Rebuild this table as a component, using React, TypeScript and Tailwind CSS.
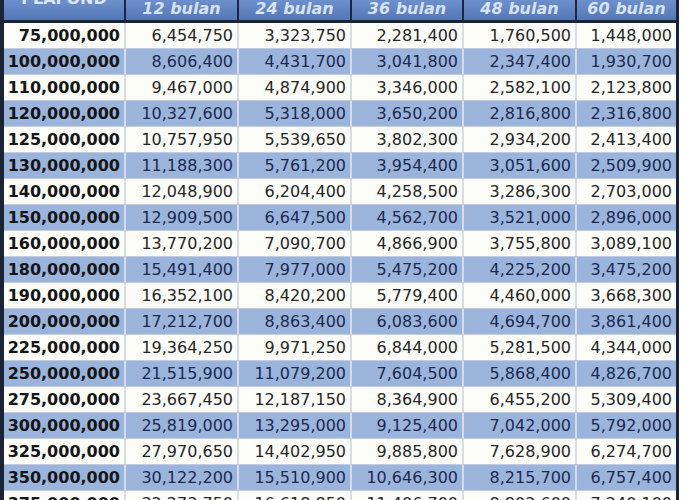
const tenors = ['12 bulan', '24 bulan', '36 bulan', '48 bulan', '60 bulan'];

const rows: string[][] = [
  ['75,000,000', '6,454,750', '3,323,750', '2,281,400', '1,760,500', '1,448,000'],
  ['100,000,000', '8,606,400', '4,431,700', '3,041,800', '2,347,400', '1,930,700'],
  ['110,000,000', '9,467,000', '4,874,900', '3,346,000', '2,582,100', '2,123,800'],
  ['120,000,000', '10,327,600', '5,318,000', '3,650,200', '2,816,800', '2,316,800'],
  ['125,000,000', '10,757,950', '5,539,650', '3,802,300', '2,934,200', '2,413,400'],
  ['130,000,000', '11,188,300', '5,761,200', '3,954,400', '3,051,600', '2,509,900'],
  ['140,000,000', '12,048,900', '6,204,400', '4,258,500', '3,286,300', '2,703,000'],
  ['150,000,000', '12,909,500', '6,647,500', '4,562,700', '3,521,000', '2,896,000'],
  ['160,000,000', '13,770,200', '7,090,700', '4,866,900', '3,755,800', '3,089,100'],
  ['180,000,000', '15,491,400', '7,977,000', '5,475,200', '4,225,200', '3,475,200'],
  ['190,000,000', '16,352,100', '8,420,200', '5,779,400', '4,460,000', '3,668,300'],
  ['200,000,000', '17,212,700', '8,863,400', '6,083,600', '4,694,700', '3,861,400'],
  ['225,000,000', '19,364,250', '9,971,250', '6,844,000', '5,281,500', '4,344,000'],
  ['250,000,000', '21,515,900', '11,079,200', '7,604,500', '5,868,400', '4,826,700'],
  ['275,000,000', '23,667,450', '12,187,150', '8,364,900', '6,455,200', '5,309,400'],
  ['300,000,000', '25,819,000', '13,295,000', '9,125,400', '7,042,000', '5,792,000'],
  ['325,000,000', '27,970,650', '14,402,950', '9,885,800', '7,628,900', '6,274,700'],
  ['350,000,000', '30,122,200', '15,510,900', '10,646,300', '8,215,700', '6,757,400'],
  ['375,000,000', '32,273,750', '16,618,850', '11,406,700', '8,802,600', '7,240,100'],
];

const cols = 'grid grid-cols-[122px_113px_113px_112px_113px_99px]';

export default function App() {
  return (
    <div className="w-[700px] h-[500px] overflow-hidden bg-white font-['DejaVu_Sans',sans-serif]">
      <div className="w-[679px] border-l-4 border-r-[3px] border-[#1b2336] bg-[#1b2336]">
        {/* header, top part cut off */}
        <div className={`${cols} h-[23px] border-b-[3px] border-[#1b2336] overflow-hidden`}>
          <div className="border-r-2 border-[#1d2640] bg-gradient-to-b from-[#6d8fcb] to-[#5577b6] flex justify-center">
            <span className="-mt-[11px] text-[16px] font-bold text-[#dbe6f7] leading-[20px]">PLAFOND</span>
          </div>
          {tenors.map((t, i) => (
            <div
              key={t}
              className={`${i < 4 ? 'border-r-2' : ''} border-[#1d2640] bg-gradient-to-b from-[#6d8fcb] to-[#5577b6] flex items-center justify-center`}
            >
              <span className="text-[16px] italic font-bold text-[#d6e2f6] leading-[18px] -mt-[2px]">{t}</span>
            </div>
          ))}
        </div>

        {rows.map((r, idx) => {
          const blue = idx % 2 === 1;
          return (
            <div
              key={r[0]}
              className={`${cols} h-[26px] border-b border-[#c3cddd] ${blue ? 'bg-[#9ab4dc] text-[#1c2a52]' : 'bg-[#fcfcf9] text-[#262626]'}`}
            >
              {r.map((v, c) => (
                <div
                  key={c}
                  className={`flex items-center justify-end pr-[4px] ${c < 5 ? 'border-r-2' : ''} ${blue ? 'border-[#d3dcea]' : 'border-[#d9dde3]'} ${c === 0 ? 'font-bold text-[16px] text-[#151515]' : 'text-[16px]'} ${c === 0 && blue ? 'text-[#141d38]' : ''}`}
                >
                  {v}
                </div>
              ))}
            </div>
          );
        })}
      </div>
    </div>
  );
}
